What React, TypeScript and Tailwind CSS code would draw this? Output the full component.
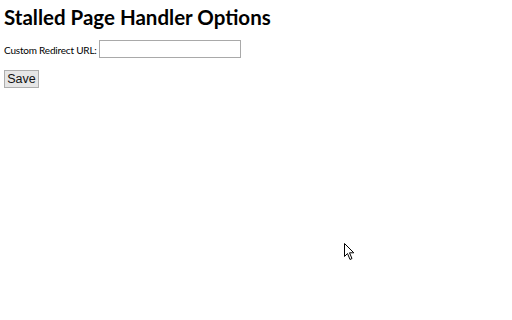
export default function App() {
  return (
    <div className="relative h-[320px] w-[512px] overflow-hidden bg-white px-1 font-['Lato',sans-serif] text-black">
      <h2 className="pt-[4px] text-[20.5px] font-bold leading-[26px]">
        Stalled Page Handler Options
      </h2>
      <div className="mt-[10px] flex items-center gap-[2px] text-[10px]">
        <label htmlFor="url" className="pt-[2px] tracking-[-0.2px]">Custom Redirect URL:</label>
        <input
          id="url"
          type="text"
          className="h-[18px] w-[142px] border border-[#a9a9a9] bg-white px-1 text-[12px] outline-none"
        />
      </div>
      <button className="mt-[12px] h-[18px] w-[35px] border border-[#adadad] bg-[#e6e6e6] font-['Liberation_Sans',Arial,sans-serif] text-[12.5px] leading-none text-[#111]">
        Save
      </button>
      <svg
        className="absolute left-[344px] top-[243px]"
        width="12"
        height="18"
        viewBox="0 0 12 18"
      >
        <path
          d="M0.5 0.5 L0.5 13.5 L3.5 10.5 L6 16.5 L8 15.5 L5.5 9.8 L9.8 9.8 Z"
          fill="white"
          stroke="black"
          strokeWidth="1"
          strokeLinejoin="round"
        />
      </svg>
    </div>
  );
}
